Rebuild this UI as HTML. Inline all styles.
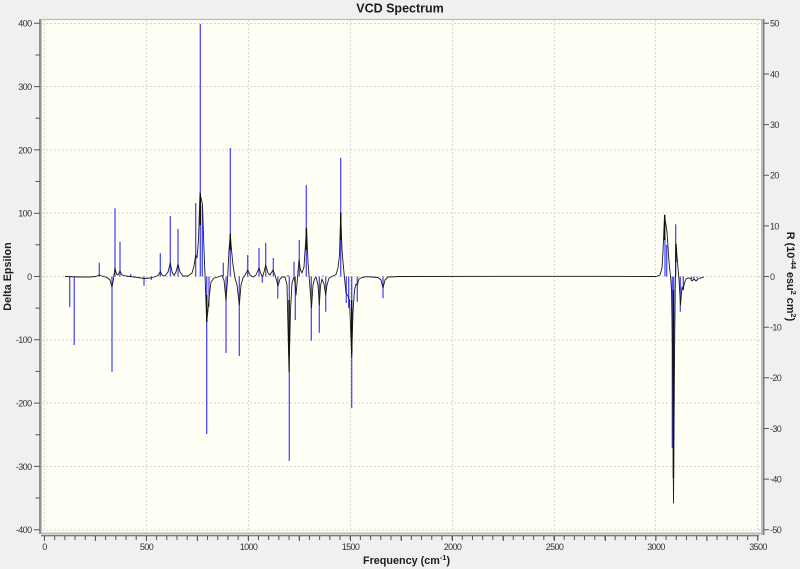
<!DOCTYPE html>
<html>
<head>
<meta charset="utf-8">
<title>VCD Spectrum</title>
<style>
html,body{margin:0;padding:0;background:#f0f0f0;}
svg{display:block;filter:blur(.3px);}
text{font-family:"Liberation Sans",sans-serif;}
.n{font-size:9px;letter-spacing:-.6px;fill:#333;}
.b{font-weight:bold;fill:#1c1c1c;}
</style>
</head>
<body>
<svg width="800" height="569" viewBox="0 0 800 569" xmlns="http://www.w3.org/2000/svg">
<rect width="800" height="569" fill="#f0f0f0"/>
<!-- plot frame -->
<rect x="41" y="19" width="721" height="515" fill="#fffff6"/>
<path d="M41 19.5H762" stroke="#bdbdbd" stroke-width="1.2" fill="none"/>
<path d="M41.5 19V534" stroke="#c4c4c4" stroke-width="1" fill="none"/>
<path d="M41 533.5H763" stroke="#bcbcbc" stroke-width="2" fill="none"/>
<path d="M762 19V535" stroke="#bdbdbd" stroke-width="2" fill="none"/>
<!-- grid -->
<g stroke="#d6d6d2" stroke-width="1" stroke-dasharray="2 2" fill="none">
<path d="M42 23.5H761M42 86.5H761M42 150H761M42 213H761M42 276.5H761M42 340H761M42 403H761M42 466.5H761M42 530H761"/>
<path d="M44.5 20V533M146.5 20V533M248.5 20V533M350.5 20V533M452.5 20V533M554.5 20V533M655.5 20V533M757.5 20V533"/>
</g>
<!-- axes -->
<g fill="none" stroke="#555">
<path d="M40 19V534" stroke-width="1.2"/>
<path d="M34 23.3H40M34 86.6H40M34 149.9H40M34 213.2H40M34 276.5H40M34 339.8H40M34 403.1H40M34 466.4H40M34 529.7H40" stroke-width="1"/>
<path d="M35.5 55H40M35.5 118.2H40M35.5 181.5H40M35.5 244.8H40M35.5 308.1H40M35.5 371.4H40M35.5 434.7H40M35.5 498H40" stroke-width="1"/>
<path d="M763.7 19V535" stroke-width="1.4" stroke="#777"/>
<path d="M764 23.3H769M764 74H769M764 124.6H769M764 175.3H769M764 225.9H769M764 276.5H769M764 327.2H769M764 377.8H769M764 428.5H769M764 479.1H769M764 529.7H769" stroke-width="1"/>
<path d="M41 535.8H759" stroke-width="1"/>
<line x1="44" y1="538" x2="759" y2="538" stroke-width="4" stroke-dasharray="1 9.19"/>
<path d="M44.5 536V541M95.4 536V541M146.5 536V541M197.4 536V541M248.5 536V541M299.4 536V541M350.5 536V541M401.4 536V541M452.5 536V541M503.4 536V541M554.5 536V541M605.4 536V541M655.8 536V541M706.9 536V541M757.7 536V541" stroke-width="1"/>
</g>
<!-- blue sticks -->
<path fill="none" stroke="#4646ff" stroke-width="1.25" d="
M69.7 276.5V307M74.2 276.5V345M99.3 276.5V262.7M112 276.5V371.7M115 276.5V208.3M120 276.5V241.7
M130.7 276.5V274M144 276.5V285.7M151.3 276.5V280M160.3 276.5V253.3M170.3 276.5V216M178 276.5V229
M195.7 276.5V203M200.3 276.5V24M202.3 276.5V205M206.7 276.5V434M209 276.5V306.7
M223.3 276.5V262.7M226 276.5V353M230.3 276.5V148M239.3 276.5V356M247.7 276.5V255M259 276.5V248
M262.3 276.5V282.7M265.7 276.5V243M273.3 276.5V258M277.8 276.5V298.5
M288 276.5V275M289.3 276.5V461M294 276.5V261.7M295.3 276.5V320M299.3 276.5V240M306.3 276.5V185
M311.3 276.5V340.7M319.3 276.5V332.7M322.7 276.5V275.7M325.7 276.5V311.7M340.7 276.5V157.7
M346.3 276.5V303M348.7 276.5V308M351.7 276.5V408M357.3 276.5V302M383 276.5V298.3
M665 276.5V238M666.7 276.5V245M672.3 276.5V448M673.7 276.5V400M675.7 276.5V224.3
M680.3 276.5V311.7M683.3 276.5V290M691.7 276.5V279M694 276.5V278.5M697 276.5V278"/>
<!-- black curve -->
<polyline fill="none" stroke="#1a1a1a" stroke-width=".9" stroke-linejoin="round" points="
65,276.5 80,277 90,277 96,276.5 99,275 102,276 107,277.5 110,280 112,287 113.5,279 115,268 116.5,274 118,275 120,271 122,275 126,276 130,276.5
138,277.5 144,278.5 150,278 156,276.5 158.5,275 160.3,271.5 162,275 165,276 168,272 170.3,263 172,272 174,275.5 176,272 178,264 180,272 183,276 188,276
192,273 194,266 195.7,255 197,258 198.5,240 200,193 201.5,200 202.5,205 204,250 205,275 206.7,322 208,310 209,298 211,282 214,278 218,277 222,275.5 224,280 226,300 227.5,280 229,250 230.3,234 231.5,250 233,265
235,278 237,285 239.3,305 241,285 243,278 245,275 247.7,270 250,275 253,277 256,275 259,268 261,274 262.5,277 264,272 265.7,265 268,273 270,275 273,270 275,275 277,282 278,286 280,279
282,277 285,277 287,285 289,372 290.5,310 292,283 294,277 295,283 296,295 297.5,278 299,260 300.5,270 302,273 304,267 306.5,228 308,262 309,275 310,288 311.5,308 313,285 314.5,279 316,277 318,285 319.3,305 320.5,286 322,279 324,284 325.7,295 327,285 329,278 332,276.5
336,274.5 338,268 339.5,255 340.7,213 342,250 343,262 344.5,278 346,293 348,296 349.5,300 351.7,357 353,312 354.5,290 356,284 357.3,285 359,279 362,277.5 366,276.7 372,277 378,277.5 381,280 383,288 385,280 388,277 400,276.5
520,276.3 600,276.3 650,276.5 656,276.5 660,275 662,268 663,252 664.5,215 665.5,222 667,232 669,262 670.5,276 671.5,290 672.5,350 673.5,503 674.5,360 675.2,290 676,244 677.5,262 679,280 680.5,305 682,287 683,290 684.5,283 686,279 688,278 690,278 692,281 694,279 696,281 698,279 701,277.8 704,277"/>
<!-- heavy dark parts of the curve -->
<path fill="none" stroke="#111" stroke-width="1.4" d="M289 300V355M351.7 300V353M673.4 290V478M206.7 295V322M340.7 213V240M230.3 234V250M306.4 228V250M200.3 193V225M664.7 215V240M676 244V262"/>
<!-- labels -->
<text x="400" y="12.5" text-anchor="middle" class="b" font-size="12.5">VCD Spectrum</text>
<g class="n" text-anchor="end">
<text x="31.5" y="26.7">400</text>
<text x="31.5" y="90">300</text>
<text x="31.5" y="153.3">200</text>
<text x="31.5" y="216.6">100</text>
<text x="31.5" y="280">0</text>
<text x="31.5" y="343.2">-100</text>
<text x="31.5" y="406.5">-200</text>
<text x="31.5" y="469.8">-300</text>
<text x="31.5" y="533">-400</text>
</g>
<g class="n">
<text x="770" y="26.7">50</text>
<text x="770" y="77.4">40</text>
<text x="770" y="128">30</text>
<text x="770" y="178.7">20</text>
<text x="770" y="229.3">10</text>
<text x="770" y="280">0</text>
<text x="770" y="330.6">-10</text>
<text x="770" y="381.2">-20</text>
<text x="770" y="431.9">-30</text>
<text x="770" y="482.5">-40</text>
<text x="770" y="533">-50</text>
</g>
<g class="n" text-anchor="middle">
<text x="44.5" y="550">0</text>
<text x="146.5" y="550">500</text>
<text x="248.5" y="550">1000</text>
<text x="350.5" y="550">1500</text>
<text x="452.5" y="550">2000</text>
<text x="554.5" y="550">2500</text>
<text x="656" y="550">3000</text>
<text x="758" y="550">3500</text>
</g>
<text x="363" y="564" class="b" font-size="10.8">Frequency (cm<tspan font-size="7.5" dy="-4">-1</tspan><tspan dy="4">)</tspan></text>
<text transform="translate(11,276.5) rotate(-90)" text-anchor="middle" class="b" font-size="10.8">Delta Epsilon</text>
<text transform="translate(787,276.5) rotate(90)" text-anchor="middle" class="b" font-size="10.8">R (10<tspan font-size="7.5" dy="-4">-44</tspan><tspan dy="4"> esu</tspan><tspan font-size="7.5" dy="-4">2</tspan><tspan dy="4"> cm</tspan><tspan font-size="7.5" dy="-4">2</tspan><tspan dy="4">)</tspan></text>
</svg>
</body>
</html>
